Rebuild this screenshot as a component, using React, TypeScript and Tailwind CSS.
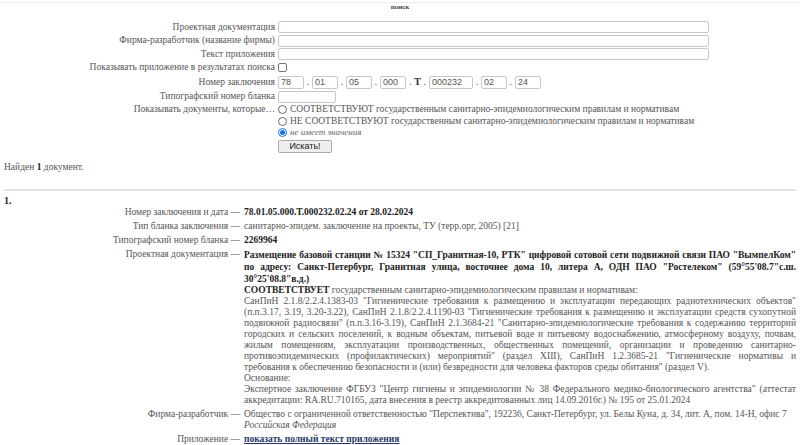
import React from "react";

const serif = "[font-family:'Liberation_Serif',serif]";
const sans = "[font-family:'Liberation_Sans',Arial,sans-serif]";

function FormRow({ label, h, children }: { label?: string; h: string; children?: React.ReactNode }) {
  return (
    <div className={`flex items-center ${h}`}>
      <div className="w-[278px] shrink-0 pr-[3px] text-right whitespace-nowrap">{label}</div>
      <div className="flex items-center">{children}</div>
    </div>
  );
}

function NumBox({ value, w }: { value: string; w: string }) {
  return (
    <input
      readOnly
      value={value}
      className={`${w} h-[13px] border border-[#c8c8c8] rounded-[2px] px-[2px] text-[9px] text-[#555] ${sans} outline-none`}
    />
  );
}

function Dot() {
  return <span className="w-[8px] text-center text-[#444]">.</span>;
}

function ResRow({ label, children }: { label: string; children: React.ReactNode }) {
  return (
    <div className="flex">
      <div className="w-[244px] shrink-0 pr-[4px] text-right whitespace-nowrap">{label} —</div>
      <div className="flex-1 pr-[4px]">{children}</div>
    </div>
  );
}

export default function App() {
  return (
    <div className={`w-[800px] h-[445px] overflow-hidden bg-white text-[#555] ${serif}`}>
      {/* top strip */}
      <div className="h-[3px] border-b border-[#ececec]" />
      <div className="text-center text-[7px] font-bold leading-[9px] text-[#444]">поиск</div>

      {/* search form */}
      <div className="mt-[8.5px] text-[9.5px] leading-[11px]">
        <FormRow label="Проектная документация" h="h-[13.5px]">
          <input className="w-[431px] h-[12px] border border-[#c8c8c8] rounded-[2px] outline-none" />
        </FormRow>
        <FormRow label="Фирма-разработчик (название фирмы)" h="h-[13.5px]">
          <input className="w-[431px] h-[12px] border border-[#c8c8c8] rounded-[2px] outline-none" />
        </FormRow>
        <FormRow label="Текст приложения" h="h-[13.5px]">
          <input className="w-[431px] h-[12px] border border-[#c8c8c8] rounded-[2px] outline-none" />
        </FormRow>
        <FormRow label="Показывать приложение в результатах поиска" h="h-[13px]">
          <span className="block w-[9px] h-[9px] border border-[#777] rounded-[2px]" />
        </FormRow>
        <FormRow label="Номер заключения" h="h-[16px]">
          <NumBox value="78" w="w-[26px]" />
          <Dot />
          <NumBox value="01" w="w-[26px]" />
          <Dot />
          <NumBox value="05" w="w-[26px]" />
          <Dot />
          <NumBox value="000" w="w-[26px]" />
          <span className="w-[23px] text-center text-[#333]">
            . <b className="text-[10.5px]">Т</b> .
          </span>
          <NumBox value="000232" w="w-[44px]" />
          <Dot />
          <NumBox value="02" w="w-[26px]" />
          <Dot />
          <NumBox value="24" w="w-[26px]" />
        </FormRow>
        <FormRow label="Типографский номер бланка" h="h-[13px]">
          <input className="w-[58px] h-[12px] border border-[#c8c8c8] rounded-[2px] outline-none" />
        </FormRow>
        <FormRow label="Показывать документы, которые…" h="h-[13px]">
          <span className="block w-[9px] h-[9px] mr-[3px] border border-[#666] rounded-full" />
          <span className="whitespace-nowrap">
            СООТВЕТСТВУЮТ государственным санитарно-эпидемиологическим правилам и нормативам
          </span>
        </FormRow>
        <FormRow h="h-[11px]">
          <span className="block w-[9px] h-[9px] mr-[3px] border border-[#666] rounded-full" />
          <span className="whitespace-nowrap">
            НЕ СООТВЕТСТВУЮТ государственным санитарно-эпидемиологическим правилам и нормативам
          </span>
        </FormRow>
        <FormRow h="h-[11.5px]">
          <span className="flex items-center justify-center w-[9px] h-[9px] mr-[3px] border border-[#1a73e8] rounded-full">
            <span className="block w-[5px] h-[5px] rounded-full bg-[#1a73e8]" />
          </span>
          <i className="text-[9px] text-[#666]">не имеет значения</i>
        </FormRow>
        <FormRow h="h-[14px]">
          <button
            className={`mt-[1px] w-[54px] h-[13px] border border-[#aaa] rounded-[2px] bg-[#efefef] text-[9px] leading-[11px] text-[#222] ${sans}`}
          >
            Искать!
          </button>
        </FormRow>
      </div>

      <div className="mt-[8px] px-[4px] text-[9.5px] leading-[12px]">
        Найден <b className="text-[#222]">1</b> документ.
      </div>

      <div className="mx-[4px] mt-[16px] border-t-2 border-[#e2e2e2]" />

      <div className="mt-[4px] px-[4px] text-[10px] leading-[12px] font-bold text-[#222]">1.</div>

      {/* result */}
      <div className="mt-[0.5px] flex flex-col gap-[3px] text-[9.5px] leading-[11px]">
        <ResRow label="Номер заключения и дата">
          <b className="text-[#222]">78.01.05.000.Т.000232.02.24 от 28.02.2024</b>
        </ResRow>
        <ResRow label="Тип бланка заключения">
          санитарно-эпидем. заключение на проекты, ТУ (терр.орг, 2005) [21]
        </ResRow>
        <ResRow label="Типографский номер бланка">
          <b className="text-[#222]">2269964</b>
        </ResRow>
        <ResRow label="Проектная документация">
          <div className="text-justify">
            <p className="font-bold text-[#222] leading-[12px]">
              Размещение базовой станции № 15324 "СП_Гранитная-10, РТК" цифровой сотовой сети подвижной связи ПАО
              "ВымпелКом" по адресу: Санкт-Петербург, Гранитная улица, восточнее дома 10, литера А, ОДН ПАО
              "Ростелеком" (59°55'08.7"с.ш. 30°25'08.8"в.д.)
            </p>
            <p>
              <b className="text-[#222]">СООТВЕТСТВУЕТ</b> государственным санитарно-эпидемиологическим правилам и
              нормативам:
            </p>
            <p>
              СанПиН 2.1.8/2.2.4.1383-03 "Гигиенические требования к размещению и эксплуатации передающих
              радиотехнических объектов" (п.п.3.17, 3.19, 3.20-3.22), СанПиН 2.1.8/2.2.4.1190-03 "Гигиенические
              требования к размещению и эксплуатации средств сухопутной подвижной радиосвязи" (п.п.3.16-3.19), СанПиН
              2.1.3684-21 "Санитарно-эпидемиологические требования к содержанию территорий городских и сельских
              поселений, к водным объектам, питьевой воде и питьевому водоснабжению, атмосферному воздуху, почвам,
              жилым помещениям, эксплуатации производственных, общественных помещений, организации и проведению
              санитарно-противоэпидемических (профилактических) мероприятий" (раздел XIII), СанПиН 1.2.3685-21
              "Гигиенические нормативы и требования{"\u00a0"}к обеспечению безопасности и (или) безвредности для
              человека факторов среды обитания" (раздел V).
            </p>
            <p>Основание:</p>
            <p>
              Экспертное заключение ФГБУЗ "Центр гигиены и эпидемиологии № 38 Федерального медико-биологического
              агентства" (аттестат аккредитации: RA.RU.710165, дата внесения в реестр аккредитованных лиц 14.09.2016г.)
              № 195 от 25.01.2024
            </p>
          </div>
        </ResRow>
        <ResRow label="Фирма-разработчик">
          <p>
            Общество с ограниченной ответственностью "Перспектива", 192236, Санкт-Петербург, ул. Белы Куна, д. 34,
            лит. А, пом. 14-Н, офис 7
          </p>
          <p className="italic">Российская Федерация</p>
        </ResRow>
        <ResRow label="Приложение">
          <a href="#" className="font-bold text-[#1f3a68] underline">
            показать полный текст приложения
          </a>
        </ResRow>
      </div>
    </div>
  );
}
